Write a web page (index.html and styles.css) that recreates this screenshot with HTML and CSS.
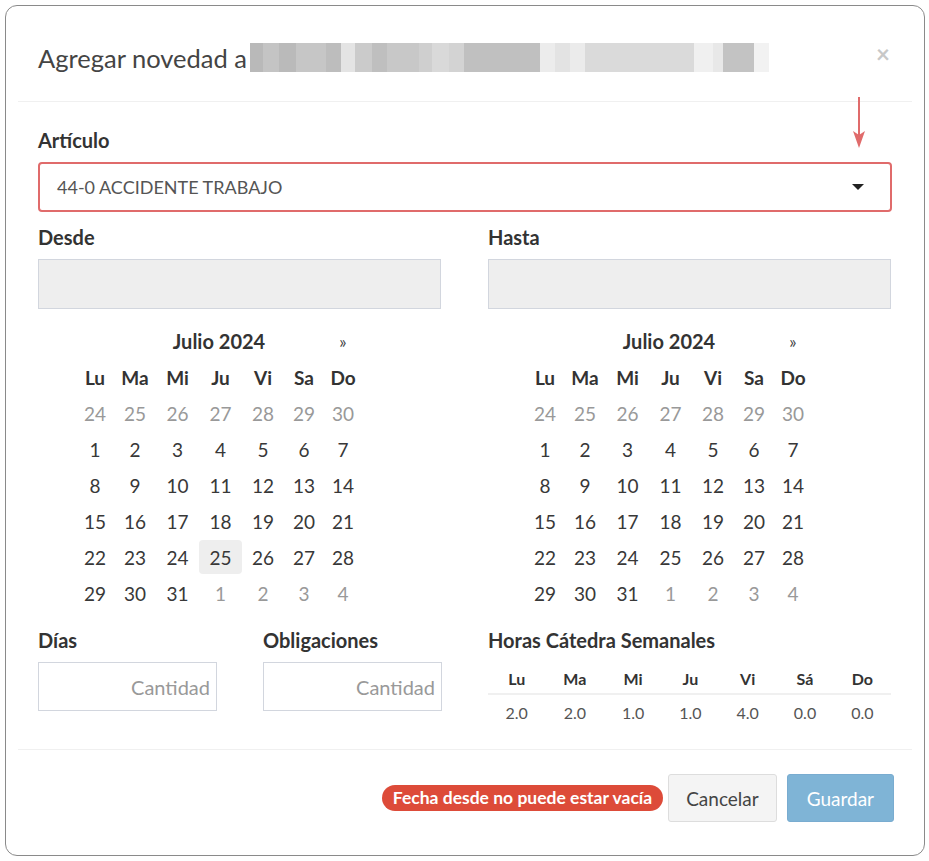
FILE: index.html
```html
<!DOCTYPE html>
<html lang="es">
<head>
    <meta charset="UTF-8">
    <meta name="viewport" content="width=device-width, initial-scale=1.0">
    <title>Agregar novedad</title>
    <link rel="stylesheet" href="styles.css">
</head>
<body>
    <div class="modal">
        <div class="modal-header">
            <h4 class="modal-title">Agregar novedad a
                <span class="redacted">
                    <i style="width:13px;background:#b9b9b9"></i><i style="width:16px;background:#c4c4c4"></i><i style="width:17px;background:#bababa"></i><i style="width:30px;background:#c6c6c6"></i><i style="width:15px;background:#bdbdbd"></i><i style="width:14px;background:#e4e4e4"></i><i style="width:17px;background:#cbcbcb"></i><i style="width:15px;background:#bfbfbf"></i><i style="width:32px;background:#c8c8c8"></i><i style="width:13px;background:#cfcfcf"></i><i style="width:17px;background:#d9d9d9"></i><i style="width:15px;background:#d3d3d3"></i><i style="width:76px;background:#c0c0c0"></i><i style="width:15px;background:#ececec"></i><i style="width:15px;background:#e3e3e3"></i><i style="width:15px;background:#ebebeb"></i><i style="width:109px;background:#dadada"></i><i style="width:19px;background:#f0f0f0"></i><i style="width:10px;background:#e8e8e8"></i><i style="width:31px;background:#c3c3c3"></i><i style="width:15px;background:#f2f2f2"></i>
                </span>
            </h4>
            <button class="close" type="button">&times;</button>
        </div>

        <div class="modal-body">
            <!-- flecha roja de la captura -->
            <svg class="hint-arrow" width="14" height="52" viewBox="0 0 14 52">
                <line x1="7" y1="0" x2="7" y2="44" stroke="#e06b6b" stroke-width="2"/>
                <path d="M1 34 L7 51 L13 34 L7 38 Z" fill="#e06b6b"/>
            </svg>

            <div class="form-group">
                <label>Artículo</label>
                <div class="select-box">
                    <span>44-0 ACCIDENTE TRABAJO</span>
                    <span class="caret"></span>
                </div>
            </div>

            <div class="two-col">
                <div class="form-group">
                    <label>Desde</label>
                    <div class="input disabled"></div>
                    <div class="datepicker" id="calDesde"></div>
                </div>
                <div class="form-group">
                    <label>Hasta</label>
                    <div class="input disabled"></div>
                    <div class="datepicker" id="calHasta"></div>
                </div>
            </div>

            <div class="two-col bottom-row">
                <div class="sub-cols">
                    <div>
                        <label>Días</label>
                        <div class="input"><span class="placeholder">Cantidad</span></div>
                    </div>
                    <div>
                        <label>Obligaciones</label>
                        <div class="input"><span class="placeholder">Cantidad</span></div>
                    </div>
                </div>
                <div>
                    <label>Horas Cátedra Semanales</label>
                    <table class="hours">
                        <thead>
                            <tr><th>Lu</th><th>Ma</th><th>Mi</th><th>Ju</th><th>Vi</th><th>Sá</th><th>Do</th></tr>
                        </thead>
                        <tbody>
                            <tr><td>2.0</td><td>2.0</td><td>1.0</td><td>1.0</td><td>4.0</td><td>0.0</td><td>0.0</td></tr>
                        </tbody>
                    </table>
                </div>
            </div>
        </div>

        <div class="modal-footer">
            <span class="label-danger">Fecha desde no puede estar vacía</span>
            <button class="btn btn-default" type="button">Cancelar</button>
            <button class="btn btn-primary" type="button">Guardar</button>
        </div>
    </div>

    <script>
        function buildCalendar(el, highlight) {
            const names = ['Lu', 'Ma', 'Mi', 'Ju', 'Vi', 'Sa', 'Do'];
            let html = '<span></span><span class="month">Julio 2024</span><span class="next">&raquo;</span>';
            names.forEach(n => { html += `<span class="dow">${n}</span>`; });

            const days = [];
            for (let d = 24; d <= 30; d++) days.push({ n: d, muted: true });
            for (let d = 1; d <= 31; d++) days.push({ n: d });
            for (let d = 1; d <= 4; d++) days.push({ n: d, muted: true });

            days.forEach(day => {
                let cls = 'day';
                if (day.muted) cls += ' muted';
                if (highlight && !day.muted && day.n === 25) cls += ' today';
                html += `<span class="${cls}">${day.n}</span>`;
            });
            el.innerHTML = html;
        }

        buildCalendar(document.getElementById('calDesde'), true);
        buildCalendar(document.getElementById('calHasta'), false);
    </script>
</body>
</html>
```

FILE: styles.css
```css
body {
    font-family: 'Lato', 'Liberation Sans', sans-serif;
    margin: 0;
    padding: 5px 4px 4px 5px;
    background: #fff;
    color: #333;
}

.modal {
    width: 894px;
    padding: 0 12px;
    border: 1.5px solid #8a8a8a;
    border-radius: 12px;
}

.modal-header {
    height: 95px;
    padding: 0 20px;
    border-bottom: 1px solid #f0f0f0;
    display: flex;
    align-items: center;
    justify-content: space-between;
}

.modal-title {
    margin: 8px 0 0 0;
    font-size: 25.5px;
    font-weight: 400;
    color: #444;
    display: flex;
    align-items: center;
}

.redacted {
    display: flex;
    height: 29px;
    margin-left: 3px;
}

.redacted i {
    display: block;
    height: 100%;
}

.close {
    border: none;
    background: none;
    padding: 0;
    margin: 0 2px 0 0;
    font-family: 'Lato', sans-serif;
    font-size: 24px;
    font-weight: 700;
    color: #c8c8c8;
    cursor: pointer;
}

.modal-body {
    position: relative;
    padding: 27px 20px 19px;
}

.hint-arrow {
    position: absolute;
    right: 46px;
    top: -5px;
}

label {
    display: block;
    font-size: 20px;
    font-weight: 700;
    line-height: 22px;
    margin-bottom: 11px;
    color: #333;
}

.form-group {
    margin-bottom: 14px;
}

.select-box {
    height: 46px;
    border: 2px solid #e06b6b;
    border-radius: 4px;
    padding: 0 26px 0 17px;
    display: flex;
    align-items: center;
    justify-content: space-between;
    font-size: 18px;
    color: #555;
}

.caret {
    width: 0;
    height: 0;
    border-left: 6px solid transparent;
    border-right: 6px solid transparent;
    border-top: 6px solid #222;
}

.two-col {
    display: grid;
    grid-template-columns: 403px 403px;
    column-gap: 47px;
}

.bottom-row {
    margin-top: 4px;
}

.input {
    height: 49px;
    border: 1px solid #d2d6de;
    box-sizing: border-box;
    display: flex;
    align-items: center;
    justify-content: flex-end;
    padding-right: 6px;
}

.input.disabled {
    height: 50px;
    background: #eee;
}

.placeholder {
    font-size: 20px;
    color: #999;
}

.datepicker {
    display: grid;
    grid-template-columns: 38px 42px 43px 43px 42px 40px 38px;
    grid-auto-rows: 36px;
    margin: 14px 0 0 38px;
    width: 286px;
    font-size: 19px;
    color: #383838;
}

.datepicker span {
    display: flex;
    align-items: center;
    justify-content: center;
}

.datepicker .month {
    grid-column: span 5;
    font-size: 20px;
    font-weight: 700;
    color: #333;
}

.datepicker .next {
    font-size: 17px;
    color: #444;
}

.datepicker .dow {
    font-weight: 700;
    color: #333;
}

.datepicker .day.muted {
    color: #999;
}

.datepicker .day.today {
    background: #eee;
    border-radius: 4px;
    margin: 1px 0;
}

.sub-cols {
    display: grid;
    grid-template-columns: 179px 179px;
    column-gap: 46px;
}

.hours {
    width: 100%;
    border-collapse: collapse;
    font-size: 16px;
}

.hours th {
    font-weight: 700;
    color: #333;
    padding: 7px 0 5px;
    border-bottom: 2px solid #f0f0f0;
}

.hours td {
    text-align: center;
    color: #555;
    padding: 8px 0;
}

.modal-footer {
    border-top: 1px solid #f0f0f0;
    padding: 24px 18px 33px;
    display: flex;
    align-items: center;
    justify-content: flex-end;
    gap: 10px;
}

.label-danger {
    background: #dd4b39;
    color: #fff;
    font-size: 17.5px;
    font-weight: 700;
    line-height: 20px;
    padding: 3px 11px;
    border-radius: 13px;
    margin-right: -5px;
}

.btn {
    height: 48px;
    padding: 0 17px;
    border-radius: 3px;
    font-family: 'Lato', sans-serif;
    font-size: 19px;
    cursor: pointer;
}

.btn-default {
    background: #f4f4f4;
    border: 1px solid #ddd;
    color: #444;
}

.btn-primary {
    background: #7fb4d6;
    border: 1px solid #79acd0;
    color: #fff;
    padding: 0 19px;
}
```
